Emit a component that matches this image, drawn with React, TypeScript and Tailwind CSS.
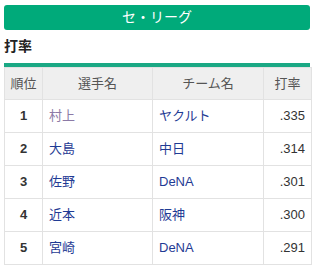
const rows = [
  { rank: 1, name: "村上", team: "ヤクルト", avg: ".335", visited: true },
  { rank: 2, name: "大島", team: "中日", avg: ".314" },
  { rank: 3, name: "佐野", team: "DeNA", avg: ".301" },
  { rank: 4, name: "近本", team: "阪神", avg: ".300" },
  { rank: 5, name: "宮崎", team: "DeNA", avg: ".291" },
];

export default function App() {
  return (
    <div
      className="w-[314px] h-[266px] bg-white px-[4px] pt-[5px] text-[13px] text-[#333]"
      style={{ fontFamily: '"Liberation Sans", "Noto Sans CJK JP", sans-serif' }}
    >
      {/* リーグ切替ボタン */}
      <div className="h-[25px] rounded-[3px] bg-[#00aa7a] text-white text-[14px] flex items-center justify-center">
        セ・リーグ
      </div>

      <h2 className="mt-[8px] text-[14px] font-bold leading-[16px] text-[#222]">打率</h2>

      <div className="mt-[9px] h-[4px] bg-[#1aa884]" />

      <table className="w-[307px] border-collapse table-fixed">
        <colgroup>
          <col className="w-[38px]" />
          <col className="w-[110px]" />
          <col className="w-[111px]" />
          <col className="w-[48px]" />
        </colgroup>
        <thead>
          <tr className="h-[32px] bg-[#efefef] text-[#555]">
            <th className="border border-[#e2e2e2] font-normal">順位</th>
            <th className="border border-[#e2e2e2] font-normal">選手名</th>
            <th className="border border-[#e2e2e2] font-normal">チーム名</th>
            <th className="border border-[#e2e2e2] font-normal">打率</th>
          </tr>
        </thead>
        <tbody>
          {rows.map((r) => (
            <tr key={r.rank} className="h-[33px]">
              <td className="border border-[#e2e2e2] text-center font-bold">{r.rank}</td>
              <td
                className={
                  "border border-[#e2e2e2] px-[6px] " +
                  (r.visited ? "text-[#8c7aa6]" : "text-[#1f3b94]")
                }
              >
                {r.name}
              </td>
              <td className="border border-[#e2e2e2] px-[6px] text-[#1f3b94]">{r.team}</td>
              <td className="border border-[#e2e2e2] px-[6px] text-right">{r.avg}</td>
            </tr>
          ))}
        </tbody>
      </table>
    </div>
  );
}
